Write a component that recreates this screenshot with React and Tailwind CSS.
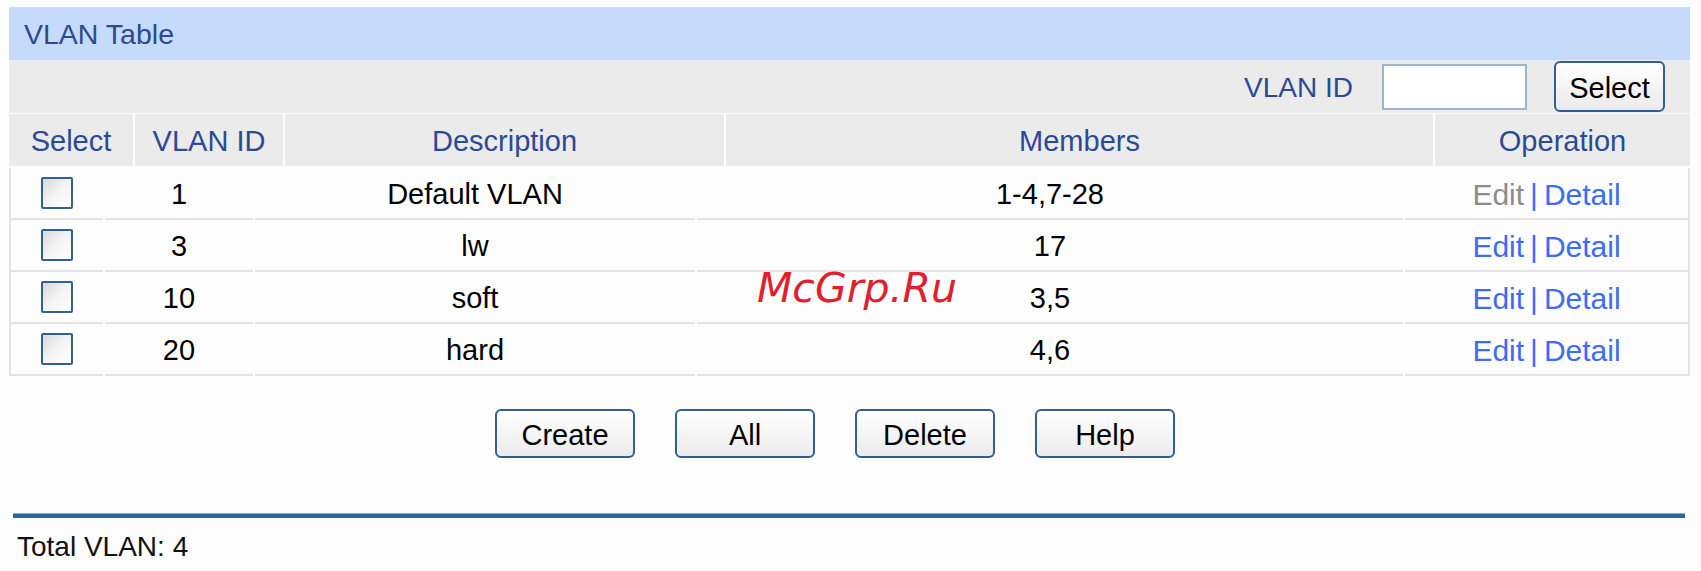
const FONT = { fontFamily: '"Liberation Sans", Arial, sans-serif' }

const rows = [
  { id: 1, desc: 'Default VLAN', members: '1-4,7-28', editDisabled: true },
  { id: 3, desc: 'lw', members: '17' },
  { id: 10, desc: 'soft', members: '3,5' },
  { id: 20, desc: 'hard', members: '4,6' },
]

const headers = ['Select', 'VLAN ID', 'Description', 'Members', 'Operation']

function Checkbox() {
  return (
    <span className="block w-[32px] h-[32px] rounded-[2px] border-2 border-[#2f5f93] bg-gradient-to-br from-[#d9d9d9] via-[#f4f4f4] to-white" />
  )
}

function Btn({ children, className = '' }) {
  return (
    <button
      className={`h-[49px] pt-[4px] rounded-[6px] border-2 border-[#2f5f93] bg-gradient-to-b from-white to-[#ebebeb] text-[29px] text-black leading-none ${className}`}
    >
      {children}
    </button>
  )
}

export default function App() {
  return (
    <div className="relative w-[1701px] h-[571px] bg-[#fdfdfd] pt-[7px] pl-[9px] pr-[11px] overflow-hidden" style={FONT}>
      {/* title bar */}
      <div className="h-[53px] bg-[#c6dafc] flex items-center pl-[15px] pt-[2px] text-[28.5px] text-[#2c4b8e]">
        VLAN Table
      </div>

      {/* filter */}
      <div className="h-[53px] bg-[#ebebeb] flex items-center justify-end pr-[25px]">
        <span className="text-[28px] text-[#2b4a96] pt-[2px]">VLAN ID</span>
        <input className="ml-[29px] w-[145px] h-[46px] bg-white border-2 border-[#9fb4c8] outline-none" />
        <Btn className="ml-[27px] w-[111px] h-[51px]">Select</Btn>
      </div>

      {/* header row */}
      <div className="mt-[1px] grid grid-cols-[124px_148px_439px_707px_1fr] gap-x-[2px] h-[52px]">
        {headers.map((h) => (
          <div key={h} className="bg-[#ebebeb] flex items-center justify-center pt-[3px] text-[29px] text-[#2b4a96]">
            {h}
          </div>
        ))}
      </div>

      {/* body */}
      <div className="mt-[2px] border-x-2 border-[#e3e3e3]">
        {rows.map((r) => (
          <div key={r.id} className="grid grid-cols-[92px_148px_440px_706px_1fr] gap-x-[2px] h-[52px] text-[29px] text-black">
            <div className="border-b-2 border-[#e3e3e3] flex items-center justify-center">
              <Checkbox />
            </div>
            <div className="border-b-2 border-[#e3e3e3] flex items-center justify-center pt-[3px]">{r.id}</div>
            <div className="border-b-2 border-[#e3e3e3] flex items-center justify-center pt-[3px]">{r.desc}</div>
            <div className="border-b-2 border-[#e3e3e3] flex items-center justify-center pt-[3px]">{r.members}</div>
            <div className="border-b-2 border-[#e3e3e3] flex items-center justify-center pt-[3px] text-[30px]">
              <span className={r.editDisabled ? 'text-[#8c8c8c]' : 'text-[#3b6cf2]'}>Edit</span>
              <span className="text-[#3b6cf2] mx-[6px]">|</span>
              <span className="text-[#3b6cf2]">Detail</span>
            </div>
          </div>
        ))}
      </div>

      {/* actions */}
      <div className="mt-[33px] flex gap-x-[40px] pl-[486px]">
        <Btn className="w-[140px]">Create</Btn>
        <Btn className="w-[140px]">All</Btn>
        <Btn className="w-[140px]">Delete</Btn>
        <Btn className="w-[140px]">Help</Btn>
      </div>

      <div className="mt-[55px] ml-[4px] mr-[5px] h-[5px] bg-[#2e6496] border-t border-[#8fb0cc]" />
      <div className="mt-[12px] pl-[8px] text-[28px] text-[#111] leading-[34px]">Total VLAN: 4</div>

      {/* watermark */}
      <div
        className="absolute left-[757px] top-[268px] text-[41px] italic text-[#e0202a] leading-none pointer-events-none"
        style={{ fontFamily: '"DejaVu Sans", Verdana, sans-serif' }}
      >
        McGrp.Ru
      </div>
    </div>
  )
}
